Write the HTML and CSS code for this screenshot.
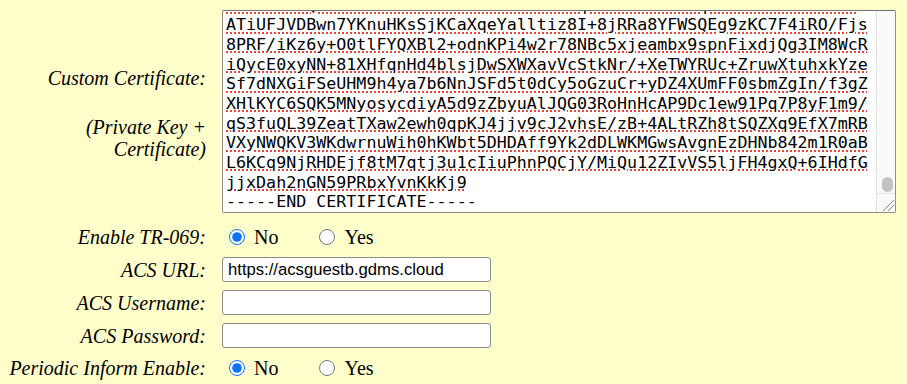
FILE: index.html
```html
<!DOCTYPE html>
<html lang="en">
<head>
<meta charset="utf-8">
<title>TR-069 Settings</title>
<link rel="stylesheet" href="styles.css">
</head>
<body>
<div class="form">
  <div class="label cert-label">
    <span>Custom Certificate:</span>
    <span class="sub">(Private Key +</span>
    <span>Certificate)</span>
  </div>
  <div class="field cert-field">
    <div class="cert">
      <div class="cert-text">
        <span class="ln sp">VHJ0UVNDQWZKWVRxS3ZLbzh5ZWNhdGVzL1dqdGdPa3BDbE5qdXA4K1FwY2RzZUZ</span>
        <span class="ln sp">ATiUFJVDBwn7YKnuHKsSjKCaXqeYalltiz8I+8jRRa8YFWSQEg9zKC7F4iRO/Fjs</span>
        <span class="ln sp">8PRF/iKz6y+O0tlFYQXBl2+odnKPi4w2r78NBc5xjeambx9spnFixdjQg3IM8WcR</span>
        <span class="ln sp">iQycE0xyNN+81XHfqnHd4blsjDwSXWXavVcStkNr/+XeTWYRUc+ZruwXtuhxkYze</span>
        <span class="ln sp">Sf7dNXGiFSeUHM9h4ya7b6NnJSFd5t0dCy5oGzuCr+yDZ4XUmFF0sbmZgIn/f3gZ</span>
        <span class="ln sp">XHlKYC6SQK5MNyosycdiyA5d9zZbyuAlJQG03RoHnHcAP9Dc1ew91Pq7P8yF1m9/</span>
        <span class="ln sp">qS3fuQL39ZeatTXaw2ewh0qpKJ4jjv9cJ2vhsE/zB+4ALtRZh8tSQZXq9EfX7mRB</span>
        <span class="ln sp">VXyNWQKV3WKdwrnuWih0hKWbt5DHDAff9Yk2dDLWKMGwsAvgnEzDHNb842m1R0aB</span>
        <span class="ln sp">L6KCq9NjRHDEjf8tM7qtj3u1cIiuPhnPQCjY/MiQu12ZIvVS5ljFH4gxQ+6IHdfG</span>
        <span class="ln sp">jjxDah2nGN59PRbxYvnKkKj9</span>
        <span class="ln">-----END CERTIFICATE-----</span>
      </div>
      <div class="scroll">
        <div class="track"><div class="thumb"></div></div>
        <div class="resizer">
          <svg width="18" height="18" viewBox="0 0 18 18" aria-hidden="true">
            <line x1="6" y1="17" x2="17" y2="6" stroke="#8a8a8a" stroke-width="1"/>
            <line x1="11" y1="17" x2="17" y2="11" stroke="#8a8a8a" stroke-width="1"/>
          </svg>
        </div>
      </div>
    </div>
  </div>

  <div class="label">Enable TR-069:</div>
  <div class="field radios">
    <label class="opt"><input type="radio" name="tr069" checked><span>No</span></label>
    <label class="opt opt-second"><input type="radio" name="tr069"><span>Yes</span></label>
  </div>

  <div class="label">ACS URL:</div>
  <div class="field"><input class="text" type="text" value="https://acsguestb.gdms.cloud"></div>

  <div class="label">ACS Username:</div>
  <div class="field"><input class="text" type="text" value=""></div>

  <div class="label">ACS Password:</div>
  <div class="field"><input class="text" type="password" value=""></div>

  <div class="label">Periodic Inform Enable:</div>
  <div class="field radios">
    <label class="opt"><input type="radio" name="periodic" checked><span>No</span></label>
    <label class="opt opt-second"><input type="radio" name="periodic"><span>Yes</span></label>
  </div>
</div>
</body>
</html>
```

FILE: styles.css
```css
html, body {
  margin: 0;
  padding: 0;
  background: #ffffcc;
  color: #000;
  font-family: "Liberation Serif", "Times New Roman", serif;
  font-size: 20px;
}

.form {
  display: grid;
  grid-template-columns: 198px auto;
  column-gap: 16px;
  row-gap: 8px;
  align-items: center;
  justify-content: start;
  padding: 10px 0 0 8px;
}

.label {
  font-style: italic;
  text-align: right;
  line-height: 22px;
  white-space: nowrap;
}

.cert-label {
  display: flex;
  flex-direction: column;
  align-items: flex-end;
}

.cert-label .sub {
  margin-top: 27px;
}

.field {
  display: flex;
  align-items: center;
}

.cert-field {
  padding-bottom: 4px;
}

.cert {
  box-sizing: border-box;
  width: 674px;
  height: 203px;
  border: 1px solid #8e8e8e;
  border-top-color: #6f6f6f;
  border-radius: 2px;
  background: #fff;
  display: flex;
  overflow: hidden;
}

.cert-text {
  flex: 1;
  overflow: hidden;
  display: flex;
  flex-direction: column;
  justify-content: flex-end;
  padding-left: 3px;
  font-family: "DejaVu Sans Mono", monospace;
  font-size: 16.67px;
  line-height: 19.67px;
  white-space: pre;
}

.ln {
  display: block;
}

.ln.sp {
  text-decoration-line: underline;
  text-decoration-style: dotted;
  text-decoration-color: #e8453c;
  text-decoration-thickness: 1.5px;
  text-underline-offset: 2px;
}

.scroll {
  width: 18px;
  border-left: 1px solid #e2e2e2;
  background: #fafafa;
  display: flex;
  flex-direction: column;
}

.track {
  flex: 1;
  display: flex;
  align-items: flex-end;
  padding: 0 2px 1px 5px;
}

.thumb {
  width: 11px;
  height: 15px;
  border-radius: 6px;
  background: #c3c3c3;
}

.resizer {
  height: 18px;
  border-top: 1px solid #e2e2e2;
  display: flex;
}

.radios {
  height: 24px;
}

.opt {
  display: flex;
  align-items: center;
  font-size: 20px;
}

.opt input {
  width: 16px;
  height: 16px;
  margin: 0 0 0 7px;
  accent-color: #0a74f5;
}

.opt span {
  margin-left: 9px;
}

.opt-second {
  margin-left: 34px;
}

.text {
  box-sizing: border-box;
  width: 269px;
  height: 25px;
  margin: 0;
  padding: 0 5px;
  border: 1px solid #8c8c8c;
  border-radius: 3px;
  background: #fff;
  font-family: "Liberation Sans", Arial, sans-serif;
  font-size: 16.67px;
  color: #000;
}
```
